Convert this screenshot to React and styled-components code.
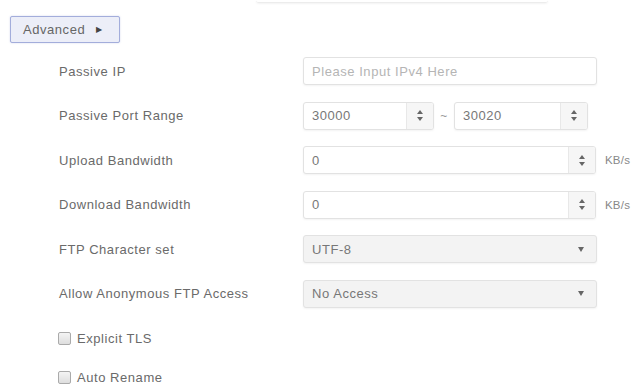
import styled, { createGlobalStyle } from 'styled-components';

const Global = createGlobalStyle`
  body {
    margin: 0;
    background: #fff;
    font-family: "Liberation Sans", Arial, sans-serif;
    color: #666;
    letter-spacing: 0.55px;
  }
`

const Page = styled.div`
  width: 640px;
  height: 384px;
  overflow: hidden;
  position: relative;
`

const TopEdge = styled.div`
  margin-left: 256px;
  width: 292px;
  height: 2px;
  border-bottom: 1px solid #ececec;
  box-shadow: 0 1px 2px rgba(0, 0, 0, 0.05);
  border-radius: 0 0 3px 3px;
`

const AdvancedButton = styled.button`
  margin: 13px 0 0 10px;
  width: 110px;
  height: 27px;
  padding: 0 0 0 12px;
  display: flex;
  align-items: center;
  gap: 11px;
  background: #eceef8;
  border: 1px solid #a3addb;
  border-radius: 2px;
  box-shadow: 0 0 2px rgba(120, 135, 200, 0.35);
  font-family: inherit;
  font-size: 13px;
  letter-spacing: 0.55px;
  color: #666;
  cursor: pointer;

  .caret {
    font-size: 8px;
    color: #444;
  }
`

const Form = styled.div`
  margin: 14px 0 0 59px;
  display: grid;
  grid-template-columns: 244px auto;
  row-gap: 16.5px;
  align-items: center;
`

const Label = styled.div`
  font-size: 13px;
  color: #6a6a6a;
`

const Field = styled.div`
  display: flex;
  align-items: center;
  height: 28px;
`

const Box = styled.div`
  box-sizing: border-box;
  width: ${p => p.$w}px;
  height: 28px;
  display: flex;
  align-items: center;
  border: 1px solid #e2e2e2;
  border-radius: 3px;
  background: ${p => (p.$gray ? '#f3f3f3' : '#fff')};
  box-shadow: 0 1px 2px rgba(0, 0, 0, 0.05);
  overflow: hidden;
`

const Value = styled.span`
  flex: 1;
  padding-left: 8px;
  font-size: 13px;
  color: ${p => (p.$placeholder ? '#b5b5b5' : '#777')};
`

const Spinner = styled.div`
  width: 26px;
  height: 100%;
  border-left: 1px solid #e8e8e8;
  background: #f6f6f6;
  display: flex;
  flex-direction: column;
  align-items: center;
  justify-content: center;
  gap: 3px;
`

const Arrow = styled.span`
  width: 0;
  height: 0;
  border-left: 3.5px solid transparent;
  border-right: 3.5px solid transparent;
  ${p => (p.$up ? 'border-bottom' : 'border-top')}: 4px solid #666;
`

const SelectArrow = styled.span`
  margin-right: 12px;
  width: 0;
  height: 0;
  border-left: 3.5px solid transparent;
  border-right: 3.5px solid transparent;
  border-top: 5px solid #666;
`

const Tilde = styled.span`
  width: 20px;
  text-align: center;
  font-size: 12px;
  color: #999;
`

const Unit = styled.span`
  margin-left: 9px;
  font-size: 11.5px;
  letter-spacing: 0.2px;
  color: #888;
`

const Checks = styled.div`
  margin: 23px 0 0 58px;
  display: flex;
  flex-direction: column;
  gap: 24px;
`

const CheckRow = styled.label`
  display: flex;
  align-items: center;
  gap: 6px;
  font-size: 13px;
  color: #6a6a6a;
`

const CheckBox = styled.span`
  box-sizing: border-box;
  width: 13px;
  height: 13px;
  border: 1px solid #aaa;
  border-radius: 2px;
  background: linear-gradient(#f4f4f4, #dedede);
`

const NumberInput = ({ value, width }) => (
  <Box $w={width}>
    <Value>{value}</Value>
    <Spinner>
      <Arrow $up />
      <Arrow />
    </Spinner>
  </Box>
)

const Select = ({ value }) => (
  <Box $w={294} $gray>
    <Value>{value}</Value>
    <SelectArrow />
  </Box>
)

export default function App() {
  return (
    <Page>
      <Global />
      <TopEdge />
      <AdvancedButton>
        Advanced <span className="caret">▶</span>
      </AdvancedButton>

      <Form>
        <Label>Passive IP</Label>
        <Field>
          <Box $w={294}>
            <Value $placeholder>Please Input IPv4 Here</Value>
          </Box>
        </Field>

        <Label>Passive Port Range</Label>
        <Field>
          <NumberInput value="30000" width={131} />
          <Tilde>~</Tilde>
          <NumberInput value="30020" width={134} />
        </Field>

        <Label>Upload Bandwidth</Label>
        <Field>
          <NumberInput value="0" width={293} />
          <Unit>KB/s</Unit>
        </Field>

        <Label>Download Bandwidth</Label>
        <Field>
          <NumberInput value="0" width={293} />
          <Unit>KB/s</Unit>
        </Field>

        <Label>FTP Character set</Label>
        <Field>
          <Select value="UTF-8" />
        </Field>

        <Label>Allow Anonymous FTP Access</Label>
        <Field>
          <Select value="No Access" />
        </Field>
      </Form>

      <Checks>
        <CheckRow>
          <CheckBox />
          Explicit TLS
        </CheckRow>
        <CheckRow>
          <CheckBox />
          Auto Rename
        </CheckRow>
      </Checks>
    </Page>
  )
}
